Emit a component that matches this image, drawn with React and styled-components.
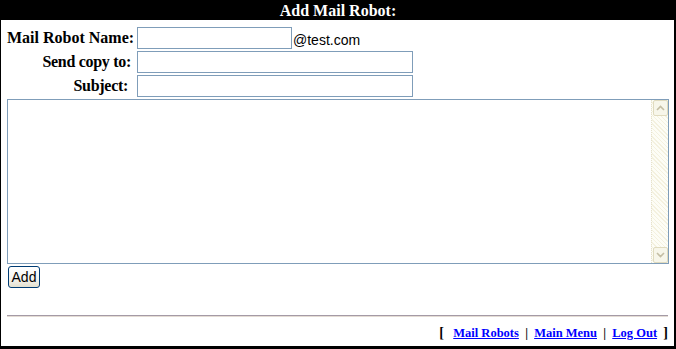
import React from 'react';
import styled, { createGlobalStyle } from 'styled-components';

const GlobalStyle = createGlobalStyle`
    html, body {
        margin: 0;
        padding: 0;
        background: #ffffff;
    }
    body {
        font-family: "Liberation Serif", "Times New Roman", serif;
    }
`;

const Page = styled.div`
    width: 676px;
    height: 349px;
    box-sizing: border-box;
    border-left: 1px solid #000;
    border-right: 2px solid #000;
    border-bottom: 3px solid #000;
    display: flex;
    flex-direction: column;
`;

const Header = styled.h1`
    margin: 0 -2px 0 -1px;
    height: 20px;
    background: #000;
    color: #fff;
    font-size: 16px;
    font-weight: bold;
    line-height: 21px;
    text-align: center;
`;

const Body = styled.div`
    padding: 7px 4px 0 6px;
    display: flex;
    flex-direction: column;
`;

const FormGrid = styled.div`
    display: grid;
    grid-template-columns: 125px auto;
    column-gap: 5px;
    row-gap: 2px;
    align-items: center;
`;

const Label = styled.label`
    font-size: 16px;
    font-weight: bold;
    text-align: right;
    white-space: nowrap;
    letter-spacing: ${p => p.$tight ? '-0.3px' : '0'};
    padding-right: ${p => p.$pad || 0}px;
`;

const Field = styled.div`
    display: flex;
    align-items: flex-end;
    gap: 1px;
`;

const TextInput = styled.input`
    box-sizing: border-box;
    width: ${p => p.$w}px;
    height: 22px;
    margin: 0;
    border: 1px solid #7f9db9;
    padding: 1px 2px;
    font-size: 13px;
    background: #fff;
`;

const Domain = styled.span`
    font-family: "Liberation Sans", Arial, sans-serif;
    font-size: 14px;
    line-height: 16px;
    margin-bottom: 1px;
`;

const Editor = styled.div`
    position: relative;
    margin-top: 2px;
    width: 662px;
    height: 165px;
`;

const Message = styled.textarea`
    box-sizing: border-box;
    width: 100%;
    height: 100%;
    margin: 0;
    border: 1px solid #7f9db9;
    resize: none;
    overflow: hidden;
    padding: 2px 20px 2px 3px;
    font-family: "Liberation Mono", monospace;
    font-size: 13px;
    display: block;
`;

const ScrollBar = styled.div`
    position: absolute;
    top: 1px;
    right: 1px;
    bottom: 1px;
    width: 17px;
    box-sizing: border-box;
    display: flex;
    flex-direction: column;
    justify-content: space-between;
    background: repeating-linear-gradient(45deg, #fdfdf6 0 2px, #f4f1df 2px 3px);
    border-left: 1px dotted #e6e2cc;
`;

const ArrowButton = styled.div`
    height: 16px;
    margin: 0 0 0 1px;
    box-sizing: border-box;
    border: 1px solid #e0dbbf;
    border-radius: 2px;
    background: #f7f6ea;
    display: flex;
    align-items: center;
    justify-content: center;
`;

const ButtonRow = styled.div`
    margin-top: 2px;
    padding-left: 1px;
`;

const AddButton = styled.button`
    width: 32px;
    height: 22px;
    padding: 0;
    border: 1px solid #003c74;
    border-radius: 3px;
    background: linear-gradient(#ffffff 0%, #f4f3ee 60%, #e3e0cf 100%);
    font-family: "Liberation Sans", Arial, sans-serif;
    font-size: 14px;
    color: #000;
`;

const Rule = styled.hr`
    margin: 27px 0 0 0;
    width: 661px;
    height: 0;
    border: 0;
    border-top: 1px solid #a49aa6;
    border-bottom: 1px solid #e4dcd4;
`;

const Footer = styled.div`
    margin-top: 8px;
    width: 661px;
    text-align: right;
    font-size: 12.5px;
    font-weight: bold;
    white-space: pre;
`;

const Bracket = styled.span`
    font-size: 14px;
`;

const FooterLink = styled.a`
    color: #0000ff;
    text-decoration: underline;
`;

const Chevron = ({ up }) => (
    <svg width="9" height="6" viewBox="0 0 9 6">
        <path
            d={up ? 'M1 5 L4.5 1.5 L8 5' : 'M1 1 L4.5 4.5 L8 1'}
            fill="none"
            stroke="#c4bea4"
            strokeWidth="1.6"
        />
    </svg>
);

const App = () => {
    return (
        <>
            <GlobalStyle />
            <Page>
                <Header>Add Mail Robot:</Header>
                <Body>
                    <FormGrid>
                        <Label>Mail Robot Name:</Label>
                        <Field>
                            <TextInput $w={155} />
                            <Domain>@test.com</Domain>
                        </Field>
                        <Label $pad={1} $tight>Send copy to:</Label>
                        <Field>
                            <TextInput $w={276} />
                        </Field>
                        <Label $pad={4} $tight>Subject:</Label>
                        <Field>
                            <TextInput $w={276} />
                        </Field>
                    </FormGrid>
                    <Editor>
                        <Message />
                        <ScrollBar>
                            <ArrowButton><Chevron up /></ArrowButton>
                            <ArrowButton><Chevron /></ArrowButton>
                        </ScrollBar>
                    </Editor>
                    <ButtonRow>
                        <AddButton>Add</AddButton>
                    </ButtonRow>
                    <Rule />
                    <Footer>
                        <Bracket>[</Bracket>{'   '}<FooterLink href="#">Mail Robots</FooterLink>{'  |  '}
                        <FooterLink href="#">Main Menu</FooterLink>{'  |  '}
                        <FooterLink href="#">Log Out</FooterLink>{'  '}<Bracket>]</Bracket>
                    </Footer>
                </Body>
            </Page>
        </>
    );
};

export default App;
